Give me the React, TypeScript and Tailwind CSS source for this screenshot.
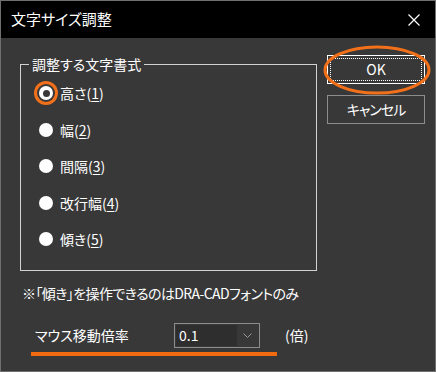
import React from "react";

const jp = "font-['Noto_Sans_CJK_JP','Noto_Sans',sans-serif] [font-feature-settings:'palt']";

const Radio: React.FC<{ label: string; num: string; focused?: boolean }> = ({ label, num, focused }) => {
    return (
        <div className="flex h-[36.5px] items-center">
            {focused ? (
                <span className="ml-[18px] flex h-[14px] w-[14px] items-center justify-center rounded-full bg-white ring-[3px] ring-[#f2701a] ring-offset-[2px] ring-offset-[#383838]">
                    <span className="h-[7px] w-[7px] rounded-full bg-[#383838]" />
                </span>
            ) : (
                <span className="ml-[18px] h-[14px] w-[14px] rounded-full bg-white" />
            )}
            <span className="ml-[7px] text-[14px] leading-none text-white">
                {label}(<span className="underline underline-offset-2">{num}</span>)
            </span>
        </div>
    );
};

export default function App() {
    return (
        <div className={`flex h-[372px] w-[436px] flex-col border border-[#6f6f6f] ${jp}`}>
            <div className="flex h-[37px] shrink-0 items-center justify-between bg-black pl-[10px] pr-[15px]">
                <span className="text-[15px] text-white">文字サイズ調整</span>
                <svg width="12" height="12" viewBox="0 0 12 12">
                    <path d="M0.5 0.5 L11.5 11.5 M11.5 0.5 L0.5 11.5" stroke="#fff" strokeWidth="1.2" />
                </svg>
            </div>
            <div className="flex flex-1 flex-col bg-[#383838]">
                <div className="flex">
                    <fieldset className="ml-[19px] mt-[16px] h-[217px] w-[297px] border border-[#d2d2d2] px-0 pb-[12px] pt-[1px]">
                        <legend className="ml-[8px] px-[3px] text-[14px] leading-[20px] text-white">調整する文字書式</legend>
                        <div className="flex flex-col">
                            <Radio label="高さ" num="1" focused />
                            <Radio label="幅" num="2" />
                            <Radio label="間隔" num="3" />
                            <Radio label="改行幅" num="4" />
                            <Radio label="傾き" num="5" />
                        </div>
                    </fieldset>
                    <div className="ml-[10px] mt-[17px] flex flex-col gap-[11px]">
                        <div className="relative h-[29px] w-[98px] border border-white p-[2px]">
                            <div className="flex h-full w-full items-center justify-center border border-dotted border-white text-[14px] text-white">
                                OK
                            </div>
                            <svg className="absolute left-[-5px] top-[-11px]" width="108" height="50" viewBox="0 0 108 50">
                                <ellipse cx="54" cy="25" rx="52" ry="23" fill="none" stroke="#f2701a" strokeWidth="3" />
                            </svg>
                        </div>
                        <div className="flex h-[29px] w-[98px] items-center justify-center border border-[#8c8c8c] text-[14px] tracking-[-1px] text-white">
                            キャンセル
                        </div>
                    </div>
                </div>
                <div className="ml-[21px] mt-[12px] text-[14px] leading-[20px] tracking-[-0.6px] text-white">
                    ※「傾き」を操作できるのはDRA-CADフォントのみ
                </div>
                <div className="ml-[30px] mt-[20px] flex flex-col">
                    <div className="flex items-center">
                        <span className="ml-[4px] w-[139px] shrink-0 text-[14px] text-white">マウス移動倍率</span>
                        <div className="flex h-[25px] w-[86px] shrink-0 items-center border border-[#8c8c8c] p-[1px]">
                            <div className="flex h-full w-[61px] items-center bg-[#2e2e2e] pl-[3px] text-[14px] text-white">0.1</div>
                            <div className="flex flex-1 items-center justify-center">
                                <svg width="9" height="5" viewBox="0 0 9 5">
                                    <path d="M0.5 0.5 L4.5 4.5 L8.5 0.5" fill="none" stroke="#9a9a9a" strokeWidth="1" />
                                </svg>
                            </div>
                        </div>
                        <span className="ml-[25px] shrink-0 whitespace-nowrap text-[14px] text-white">(倍)</span>
                    </div>
                    <div className="mt-[4px] h-[4px] w-[246px] bg-[#f26a10]" />
                </div>
            </div>
        </div>
    );
}
